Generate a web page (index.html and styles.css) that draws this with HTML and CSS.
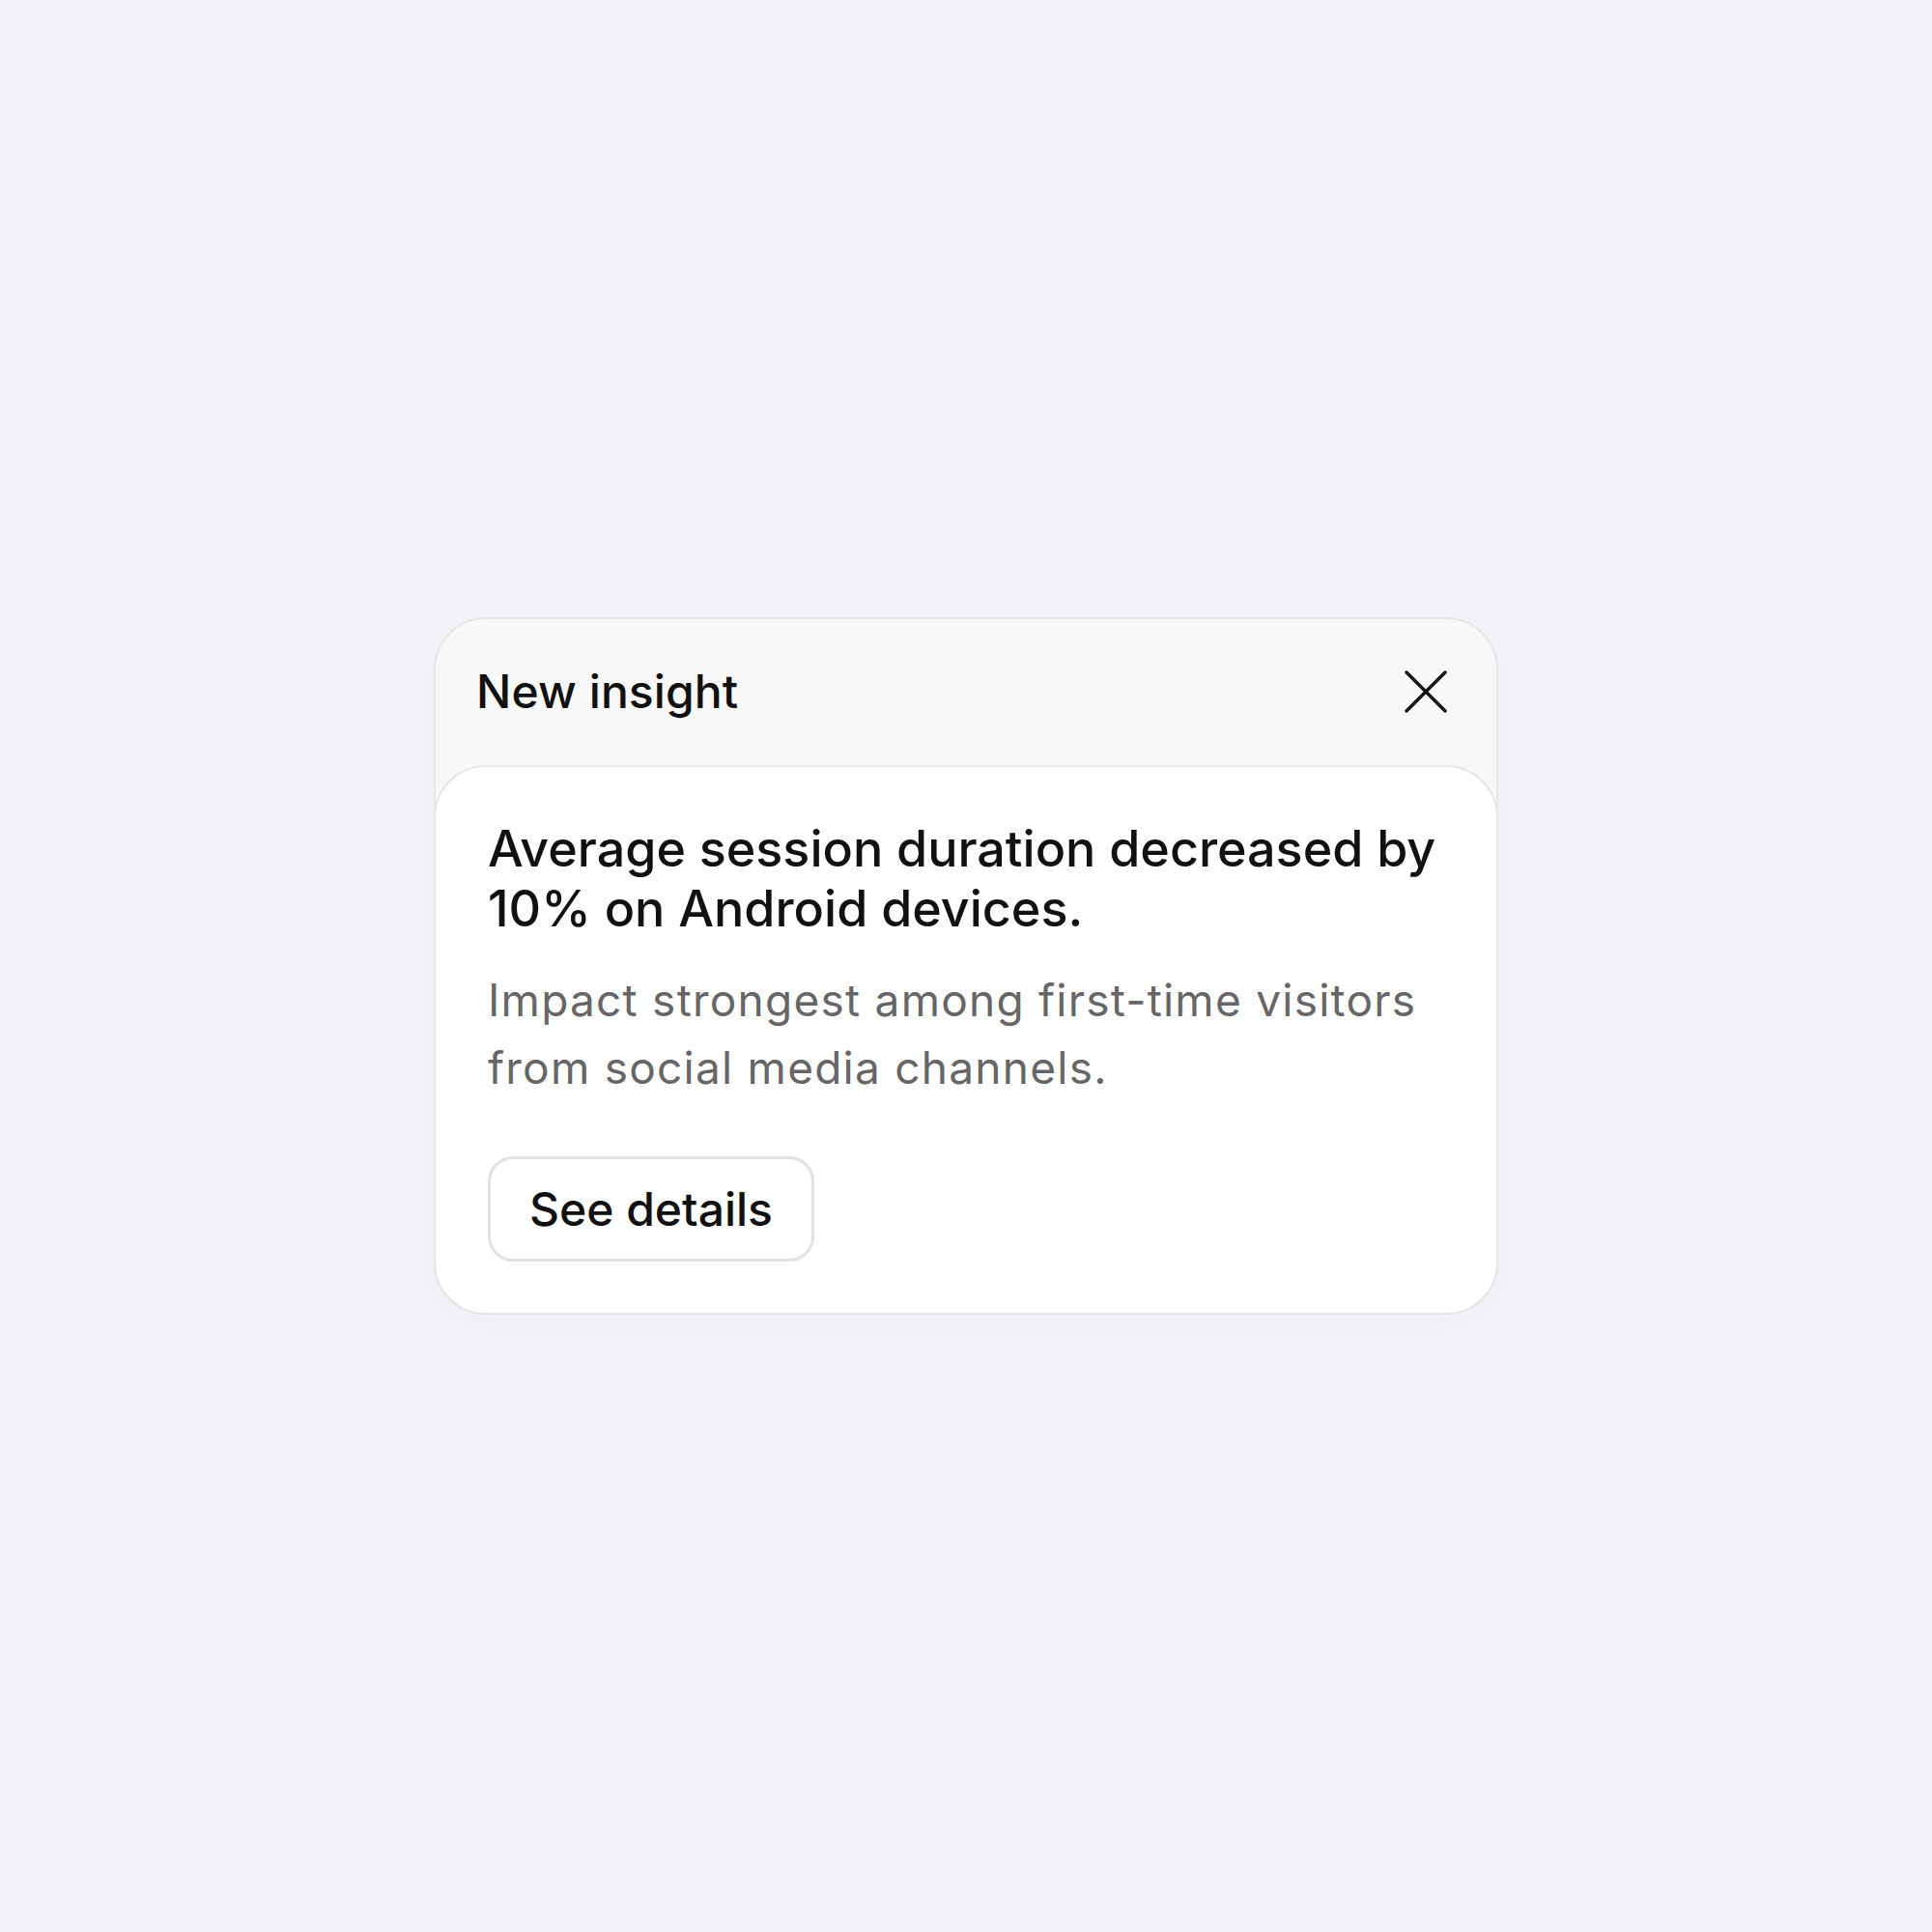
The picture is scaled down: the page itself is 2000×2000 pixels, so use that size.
FILE: index.html
```html
<!DOCTYPE html>
<html lang="en">
<head>
<meta charset="utf-8">
<title>New insight</title>
<link rel="stylesheet" href="styles.css">
</head>
<body>
<main class="stage">
  <section class="insight-card">
    <header class="insight-header">
      <h2 class="insight-label">New insight</h2>
      <button class="close-btn" aria-label="Close">
        <svg class="close-icon" width="44" height="44" viewBox="0 0 44 44" aria-hidden="true">
          <path d="M2 2 L42 42 M42 2 L2 42" fill="none" stroke="#111" stroke-width="3.4" stroke-linecap="round"/>
        </svg>
      </button>
    </header>
    <div class="insight-body">
      <h3 class="insight-title">Average session duration decreased by 10% on Android devices.</h3>
      <p class="insight-text">Impact strongest among first-time visitors from social media channels.</p>
      <button class="details-btn">See details</button>
    </div>
  </section>
</main>
</body>
</html>
```
FILE: styles.css
```css
* { box-sizing: border-box; }

html, body {
  margin: 0;
  padding: 0;
}

body {
  background: #f3f4f7;
  font-family: Inter, "Noto Sans", sans-serif;
  color: #111;
}

.stage {
  min-height: 100vh;
  display: flex;
  align-items: center;
  justify-content: center;
}

.insight-card {
  width: 1102px;
  background: #f8f8f8;
  border: 2px solid #e6e6e8;
  border-radius: 54px;
  box-shadow: 0 10px 40px rgba(20, 20, 40, 0.025);
  display: flex;
  flex-direction: column;
}

.insight-header {
  height: 151px;
  display: flex;
  align-items: center;
  justify-content: space-between;
  padding: 0 51px 0 42px;
}

.insight-label {
  margin: 0;
  font-size: 48px;
  font-weight: 500;
  line-height: 60px;
  letter-spacing: 0.1px;
  color: #111;
}

.close-btn {
  border: 0;
  background: none;
  padding: 0;
  width: 44px;
  height: 44px;
  display: flex;
}

.insight-body {
  margin: 0 -2px -2px;
  background: #fff;
  border: 2px solid #e6e6e8;
  border-radius: 54px;
  padding: 54px 54px 53px;
  display: flex;
  flex-direction: column;
  align-items: flex-start;
}

.insight-title {
  margin: 0;
  font-size: 52px;
  font-weight: 500;
  line-height: 62.4px;
  color: #111;
}

.insight-text {
  margin: 28px 0 0;
  font-size: 46px;
  font-weight: 400;
  line-height: 70px;
  letter-spacing: 1.25px;
  color: #666;
}

.details-btn {
  margin-top: 57px;
  font-family: inherit;
  font-size: 48px;
  font-weight: 500;
  line-height: 59px;
  color: #111;
  background: #fff;
  border: 3px solid #e2e2e4;
  border-radius: 26px;
  padding: 22px 40px;
}
```
